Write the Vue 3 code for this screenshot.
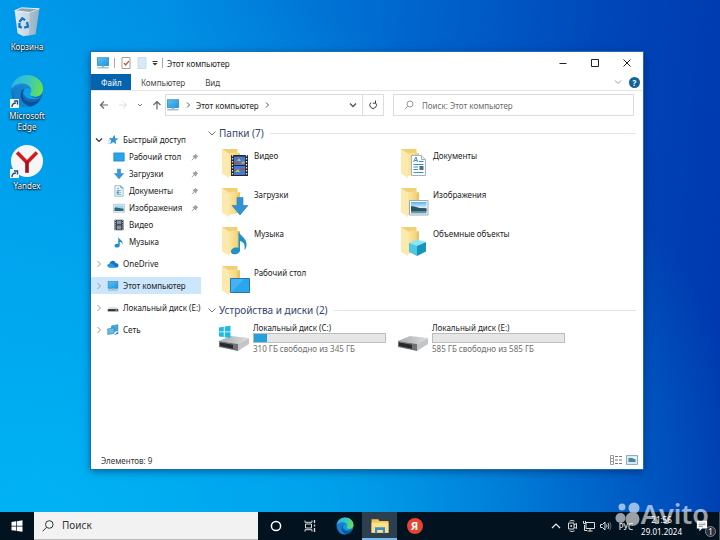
<script setup>
import { ref } from 'vue'

const search = ref('')
const taskSearch = ref('')

const shortcuts = [
  { label: 'Корзина', icon: 'bin', link: false },
  { label: 'Microsoft Edge', icon: 'edge', link: true },
  { label: 'Yandex', icon: 'yandex', link: true },
]

const quick = [
  { label: 'Рабочий стол', icon: 'desk', pinned: true },
  { label: 'Загрузки', icon: 'down', pinned: true },
  { label: 'Документы', icon: 'doc', pinned: true },
  { label: 'Изображения', icon: 'pic', pinned: true },
  { label: 'Видео', icon: 'film', pinned: false },
  { label: 'Музыка', icon: 'note', pinned: false },
]

const roots = [
  { label: 'OneDrive', icon: 'cloud' },
  { label: 'Этот компьютер', icon: 'pc', active: true },
  { label: 'Локальный диск (E:)', icon: 'minidrive' },
  { label: 'Сеть', icon: 'net' },
]

const folders = [
  { label: 'Видео', icon: 'f-film' },
  { label: 'Документы', icon: 'f-doc' },
  { label: 'Загрузки', icon: 'f-down' },
  { label: 'Изображения', icon: 'f-pic' },
  { label: 'Музыка', icon: 'f-note' },
  { label: 'Объемные объекты', icon: 'f-cube' },
  { label: 'Рабочий стол', icon: 'f-desk' },
]

const drives = [
  { label: 'Локальный диск (C:)', info: '310 ГБ свободно из 345 ГБ', used: 10, icon: 'drive-c' },
  { label: 'Локальный диск (E:)', info: '585 ГБ свободно из 585 ГБ', used: 0, icon: 'drive' },
]
</script>

<template>
  <div class="screen">
    <svg class="defs" aria-hidden="true">
      <defs>
        <linearGradient id="gFolder" x1="0" y1="0" x2="1" y2="0">
          <stop offset="0" stop-color="#fbe7a2" /><stop offset="1" stop-color="#f3d37a" />
        </linearGradient>
        <linearGradient id="gScreen" x1="0" y1="0" x2="1" y2="1">
          <stop offset="0" stop-color="#5cc4f6" /><stop offset="1" stop-color="#1e93dc" />
        </linearGradient>
        <linearGradient id="gEdgeA" x1="0" y1="0.3" x2="1" y2="0.5">
          <stop offset="0" stop-color="#2fb4e8" /><stop offset="0.5" stop-color="#35c6c4" /><stop offset="1" stop-color="#66e052" />
        </linearGradient>
        <linearGradient id="gEdgeB" x1="0" y1="0" x2="0" y2="1">
          <stop offset="0" stop-color="#1f9fe6" /><stop offset="1" stop-color="#0c59a4" />
        </linearGradient>
        <linearGradient id="gBin" x1="0" y1="0" x2="1" y2="0">
          <stop offset="0" stop-color="#dfe9ef" /><stop offset="0.55" stop-color="#c5d8e4" /><stop offset="1" stop-color="#9fb9c9" />
        </linearGradient>
        <linearGradient id="gTop" x1="0" y1="0" x2="1" y2="0">
          <stop offset="0" stop-color="#a9abae" /><stop offset="1" stop-color="#dcdddf" />
        </linearGradient>
        <linearGradient id="gSky" x1="0" y1="0" x2="0" y2="1">
          <stop offset="0" stop-color="#5eb0e4" /><stop offset="0.5" stop-color="#d9eff8" /><stop offset="0.55" stop-color="#3c6a76" /><stop offset="1" stop-color="#6ba7c4" />
        </linearGradient>
      </defs>

      <symbol id="bin" viewBox="0 0 36 36">
        <path d="M5 6 31 4l-4 27-13 2-6-3z" fill="url(#gBin)" />
        <path d="M5 6 12 3l19 1-10 4z" fill="#8da4b2" stroke="#edf4f8" stroke-width="1" />
        <path d="M21 8 31 4l-4 27-7 2z" fill="#89a6b8" opacity=".45" />
        <path d="m10 18 3-4 3 2M18 18l1 5-4 1M12.500 24l-2.500-1v-4" fill="none" stroke="#1673bd" stroke-width="2.400" />
      </symbol>
      <symbol id="edge" viewBox="0 0 36 36">
        <circle cx="18" cy="18" r="17" fill="url(#gEdgeB)" />
        <path d="M1.300 16C2.500 7 9.500 1 18 1c10 0 17 7 17 14.500 0 6-4.500 8.500-8.500 8.500-4 0-6-1.500-5.500-3 1-1.500 1.500-2.500 1.500-4C22.500 13 18 10 13 10 7.500 10 3 12.500 1.300 16z" fill="url(#gEdgeA)" />
        <path d="M12.500 17c-2.500 7 2.500 15 10.500 16.500C16 37 7 34 4.500 27 2 20 7 12.500 14 13c-.5 1-1 2.500-1.500 4z" fill="#1480d0" />
        <path d="M15.500 15.500c-5 6-1 14.500 7 14.500 4 0 7-1.500 9.500-4-2 4.500-5.500 7.500-9.500 8.200C14 33.500 9 25 12 18.500c.8-1.500 2-2.500 3.500-3z" fill="#0d4f9b" />
        <path d="M15.500 15.800c-1.700 2.200-1.600 5 0 7.200 3 4 11 5 16.500 2-2.500 1-10 .5-11-3-.3-1 1.500-2 1.500-5-2-2.500-5-3-7-1.200z" fill="#0a9fe8" />
      </symbol>
      <symbol id="yandex" viewBox="0 0 36 36">
        <circle cx="18" cy="18" r="17" fill="#f6f6f6" />
        <path d="M7.500 9 18 19.500M28.500 9 18 19.500" fill="none" stroke="#d01920" stroke-width="3.800" />
        <path d="M18 18.500v12" stroke="#a50f16" stroke-width="3.800" />
      </symbol>
      <symbol id="pc" viewBox="0 0 16 16">
        <rect x="1.500" y="2" width="13" height="9" fill="url(#gScreen)" stroke="#2a83b5" stroke-width=".8" />
        <path d="M6.500 11h3v2h-3z" fill="#9db4c0" /><path d="M1.500 13.500h13" stroke="#91b4c8" stroke-width="1.400" />
      </symbol>
      <symbol id="star" viewBox="0 0 16 16">
        <path d="m10 1 1 4.500 4.500.8-4 2.500 1 5-4-3-4.500 2.700 1.600-4.700L2 5.500l5 .2z" fill="#2b93d1" />
        <path d="M1 9h3M1 12h3" stroke="#8dc2e2" />
      </symbol>
      <symbol id="desk" viewBox="0 0 16 16"><path d="M1 2.500h14v11H1z" fill="#27a4ee" stroke="#177ab8" stroke-width=".8" /></symbol>
      <symbol id="down" viewBox="0 0 16 16"><path d="M5.500 1h5v6H15l-7 8-7-8h4.500z" fill="#3b97d6" /></symbol>
      <symbol id="doc" viewBox="0 0 16 16">
        <path d="M2.500 1h8l3 3v11h-11z" fill="#f7fcff" stroke="#7fa6ba" /><path d="M10.500 1v3h3M5 5h3M5 7.500h6M5 12.500h6" fill="none" stroke="#3c8ab4" /><path d="M5 9h3v2H5zM9 10h2" fill="#3c8ab4" stroke="#67aacb" />
      </symbol>
      <symbol id="pic" viewBox="0 0 16 16">
        <path d="M.5 3h15v10.500H.5z" fill="#eef5f8" stroke="#a9bbc4" /><path d="M2 4.500h12V12H2z" fill="#9ed5ef" /><path d="M2 8c4-2 6 1 12 .5V12H2z" fill="#326779" />
      </symbol>
      <symbol id="film" viewBox="0 0 16 16">
        <path d="M2 1h12v14H2z" fill="#33383d" /><path d="M5 2h6v5H5zM5 8.500h6V14H5z" fill="#8296a7" /><path d="M3.300 1v14M12.700 1v14" stroke="#d7dadd" stroke-dasharray="1.500 1.500" />
      </symbol>
      <symbol id="note" viewBox="0 0 16 16">
        <path d="M7 1c.8 4 6.500 4 6 10.500-.5-2.500-2-3.500-4-4v5c0 3.500-7 4-7 .5 0-2.300 3-3.200 5-2.300z" fill="#1d8fc8" />
      </symbol>
      <symbol id="cloud" viewBox="0 0 16 16">
        <path d="M3.500 12.500C-.5 12 0 7.500 3.500 7.500 4.500 3 10 2.500 11.500 6.500c4 0 5.500 5 2 6z" fill="#1273c6" /><path d="M3.500 7.500c3-1 5 1 8.500 5h-8C0 12.500-.5 8 3.500 7.500z" fill="#2b98e4" />
      </symbol>
      <symbol id="minidrive" viewBox="0 0 16 16">
        <path d="M3 7h10l2 2.500H1z" fill="#d7d9da" /><path d="M1 9.500h14v3H1z" fill="#303234" /><path d="M11.500 11h2" stroke="#d9e8d9" />
      </symbol>
      <symbol id="net" viewBox="0 0 16 16">
        <path d="M6 2.500 14.500 1v8L6 10.500z" fill="#3fa9e3" stroke="#2b7eac" stroke-width=".8" /><path d="M1 6.500 9.500 5v7.500L1 14z" fill="#64bde9" stroke="#2b7eac" stroke-width=".8" /><path d="M9.500 15 15 9.500V13z" fill="#3a7690" />
      </symbol>
      <symbol id="pin" viewBox="0 0 10 10">
        <path d="m5.500 1 3.500 3.500-1 .4-1.200 1.200-.3 1.900-1-.2L2.200 4.500 2 3.500l1.900-.3L5.100 2z" fill="#9ba1a5" /><path d="M4 6 1 9" stroke="#8b9297" />
      </symbol>

      <symbol id="folder" viewBox="0 0 32 32">
        <path d="M2 2h15.500v25H9z" fill="#f1cf75" /><path d="M17.500 6.500 20 6v21h-6z" fill="#e9c567" />
        <path d="M2 2 9 6.500V31l-7-4.500z" fill="#fbe9ae" /><path d="M9 6.500 17.500 5v22L9 29z" fill="url(#gFolder)" />
      </symbol>
      <symbol id="f-film" viewBox="0 0 32 32">
        <use href="#folder" /><path d="M11 8h17v21H11z" fill="#23262b" /><path d="M14 9.500h11v8.500H14zM14 19h11v9H14z" fill="#4779cf" />
        <path d="m17 14 2-3 2 3zM21 17l2-3 2 2zM15 25l3-3 2 3z" fill="#e4b43c" /><path d="M14 16h4M20 22h4" stroke="#b64b3a" stroke-width="1.500" />
        <path d="M12.500 8v21M26.500 8v21" stroke="#e2e2e2" stroke-width="1.300" stroke-dasharray="1.500 1.500" />
      </symbol>
      <symbol id="f-doc" viewBox="0 0 32 32">
        <use href="#folder" /><path d="M12.500 8.500h10l4 4V28.500h-14z" fill="#fdfeff" stroke="#a5b3bc" /><path d="M22.500 8.500v4h4" fill="#dfe8ed" stroke="#a5b3bc" />
        <path d="m14.500 15 2.500-5 1.500 5M15.500 13.500h2.500M20 14.500h4.500M14.500 17.500h10M14.500 20h4.500M14.500 22.500h4.500M14.500 25.500h10" fill="none" stroke="#3a8fca" /><path d="M20.500 19h4v4h-4z" fill="#4c6e86" />
      </symbol>
      <symbol id="f-down" viewBox="0 0 32 32"><use href="#folder" /><path d="M17 11.500h6v8h5L20 29l-8-9.500h5z" fill="#3192d4" stroke="#287fbc" stroke-width=".6" /></symbol>
      <symbol id="f-pic" viewBox="0 0 32 32"><use href="#folder" /><path d="M10.500 14.500h18.500v14.500H10.500z" fill="#f8fbfc" stroke="#9aaab3" /><path d="M12 16h15.500v11.500H12z" fill="url(#gSky)" /><path d="M12 20c5 0 8 3 15.500 3v2H12z" fill="#31545c" /></symbol>
      <symbol id="f-note" viewBox="0 0 32 32"><use href="#folder" /><path d="M18.500 5.500c1 6 9 7 8 15.500-.6 3-2 4-2 4 .8-5-.5-8-4.500-9v9c0 5-9 6-9 1.500 0-3 4-5 7.500-3.500z" fill="#1f91c9" /></symbol>
      <symbol id="f-desk" viewBox="0 0 32 32"><use href="#folder" /><path d="M10.500 14.500H29.500V28.500H10.500z" fill="#2ba5ee" stroke="#1b79b4" /><path d="M11 15h13L12 28h-1z" fill="#5ebdf5" opacity=".55" /></symbol>
      <symbol id="f-cube" viewBox="0 0 32 32"><use href="#folder" /><path d="m10 18 8-3.500 9 2.500-9 4z" fill="#8ce4f5" /><path d="m10 18 8 3v10l-8-4z" fill="#4fc7e2" /><path d="m18 21 9-4v9.500L18 31z" fill="#1595bb" /></symbol>
      <symbol id="drive" viewBox="0 0 32 32">
        <path d="m1 19 12-5 18 2-11 6z" fill="url(#gTop)" /><path d="m1 19 19 3v7L1 25z" fill="#707376" /><path d="m2 20.500 13 2.300v4L2 24z" fill="#26292b" /><path d="m20 22 11-6v6l-11 7z" fill="#c3c5c7" />
      </symbol>
      <symbol id="drive-c" viewBox="0 0 32 32">
        <use href="#drive" /><path d="M1 5.500 5.800 4.800v4.600H1zM6.700 4.600 12.500 3.700v5.700H6.700zM1 10.300h4.800v4.800L1 14.500zM6.700 10.300h5.800v5.700l-5.800-.8z" fill="#1fb9e5" />
      </symbol>
    </svg>

    <main class="desktop">
      <ul class="shortcuts">
        <li v-for="s in shortcuts" :key="s.label">
          <a href="#" class="shortcut">
            <span class="pic">
              <svg class="big"><use :href="'#' + s.icon" /></svg>
              <svg v-if="s.link" class="arrow" viewBox="0 0 9 9"><path d="M0 0h9v9H0z" fill="#f4f6f8" /><path d="M2 8C2 5 4 4 6 4M4 2h3.500v3.500" fill="none" stroke="#1c4f8e" stroke-width="1.400" /></svg>
            </span>
            <span>{{ s.label }}</span>
          </a>
        </li>
      </ul>

      <section class="window">
        <header class="titlebar">
          <svg class="i14"><use href="#pc" /></svg>
          <i class="sep"></i>
          <button class="plain" aria-label="Свойства"><svg class="i12" viewBox="0 0 12 12"><path d="M2 .5h8v11H2z" fill="#fff" stroke="#a4a09a" /><path d="m4 6 1.700 2L9 4" fill="none" stroke="#c35b2c" stroke-width="1.200" /></svg></button>
          <button class="plain" aria-label="Новая папка"><svg class="i12" viewBox="0 0 12 12"><path d="M2 .5h8v11H2z" fill="#d9e8f6" stroke="#c9dced" /></svg></button>
          <button class="plain" aria-label="Настройка панели"><svg class="i6" viewBox="0 0 6 6"><path d="M.5 1.500h5" stroke="#333" /><path d="m.5 3 2.500 2.500L5.500 3z" fill="#333" /></svg></button>
          <i class="sep tight"></i>
          <h1>Этот компьютер</h1>
          <div class="controls">
            <button class="plain" aria-label="Свернуть"><svg class="i10" viewBox="0 0 10 10"><path d="M1.500 5.500h7" stroke="#222" /></svg></button>
            <button class="plain" aria-label="Развернуть"><svg class="i10" viewBox="0 0 10 10"><path d="M1.500 1.500h7v7h-7z" fill="none" stroke="#222" /></svg></button>
            <button class="plain" aria-label="Закрыть"><svg class="i10" viewBox="0 0 10 10"><path d="m1.500 1.500 7 7m0-7-7 7" stroke="#222" /></svg></button>
          </div>
        </header>

        <nav class="tabs">
          <button class="tab file">Файл</button>
          <button class="tab">Компьютер</button>
          <button class="tab">Вид</button>
          <button class="plain end" aria-label="Развернуть ленту"><svg class="i8" viewBox="0 0 8 8"><path d="m1 2.500 3 3 3-3" fill="none" stroke="#999" /></svg></button>
          <button class="help" aria-label="Справка">?</button>
        </nav>

        <div class="address">
          <div class="arrows">
            <button class="plain" aria-label="Назад"><svg class="i10" viewBox="0 0 10 10"><path d="M9 5H1.500m3.500-3.500L1.500 5 5 8.500" fill="none" stroke="#666" stroke-width="1.200" /></svg></button>
            <button class="plain" aria-label="Вперед"><svg class="i10" viewBox="0 0 10 10"><path d="M1 5h7.500M5 1.500 8.500 5 5 8.500" fill="none" stroke="#ddd" /></svg></button>
            <button class="plain" aria-label="Последние"><svg class="i6" viewBox="0 0 6 6"><path d="m1 2 2 2 2-2" fill="none" stroke="#777" /></svg></button>
            <button class="plain" aria-label="Вверх"><svg class="i10" viewBox="0 0 10 10"><path d="M5 9.500V1.500M1.500 5 5 1.500 8.500 5" fill="none" stroke="#666" stroke-width="1.200" /></svg></button>
          </div>
          <div class="path">
            <svg class="i14"><use href="#pc" /></svg>
            <svg class="i6" viewBox="0 0 6 6"><path d="m2 .5 2.500 2.500L2 5.500" fill="none" stroke="#555" /></svg>
            <a href="#">Этот компьютер</a>
            <svg class="i6" viewBox="0 0 6 6"><path d="m2 .5 2.500 2.500L2 5.500" fill="none" stroke="#555" /></svg>
            <button class="plain end" aria-label="Журнал"><svg class="i8" viewBox="0 0 8 8"><path d="m1 2.500 3 3 3-3" fill="none" stroke="#555" stroke-width="1.300" /></svg></button>
            <button class="refresh" aria-label="Обновить"><svg class="i10" viewBox="0 0 10 10"><path d="M7.500 2.800A3.300 3.300 0 1 1 3 2.600M7.500.5v2.700H4.800" fill="none" stroke="#444" /></svg></button>
          </div>
          <label class="find">
            <svg class="i10" viewBox="0 0 10 10"><circle cx="6" cy="4" r="3" fill="none" stroke="#999" /><path d="M3.800 6.200.8 9.200" stroke="#999" /></svg>
            <input v-model="search" type="search" placeholder="Поиск: Этот компьютер" aria-label="Поиск: Этот компьютер" />
          </label>
        </div>

        <div class="body">
          <nav class="tree">
            <a href="#" class="node"><svg class="i8" viewBox="0 0 8 8"><path d="m1 2.500 3 3 3-3" fill="none" stroke="#333" stroke-width="1.200" /></svg><svg class="i12"><use href="#star" /></svg><span>Быстрый доступ</span></a>
            <a v-for="q in quick" :key="q.label" href="#" class="node child">
              <svg class="i12"><use :href="'#' + q.icon" /></svg><span>{{ q.label }}</span>
              <svg v-if="q.pinned" class="i8 pinned"><use href="#pin" /></svg>
            </a>
            <a v-for="r in roots" :key="r.label" href="#" class="node root" :class="{ active: r.active }">
              <svg class="i8" viewBox="0 0 8 8"><path d="m2.500 1 3 3-3 3" fill="none" stroke="#999" /></svg><svg class="i12"><use :href="'#' + r.icon" /></svg><span>{{ r.label }}</span>
            </a>
          </nav>

          <div class="content">
            <h2><svg class="i8" viewBox="0 0 8 8"><path d="m.5 2.500 3.500 3.500 3.500-3.500" fill="none" stroke="#777" /></svg>Папки (7)</h2>
            <div class="folders">
              <a v-for="f in folders" :key="f.label" href="#" class="folder"><svg class="i32"><use :href="'#' + f.icon" /></svg><span>{{ f.label }}</span></a>
            </div>
            <h2><svg class="i8" viewBox="0 0 8 8"><path d="m.5 2.500 3.500 3.500 3.500-3.500" fill="none" stroke="#777" /></svg>Устройства и диски (2)</h2>
            <div class="drives">
              <a v-for="d in drives" :key="d.label" href="#" class="drive">
                <svg class="i32"><use :href="'#' + d.icon" /></svg>
                <span class="facts">
                  <span>{{ d.label }}</span>
                  <span class="bar"><span class="fill" :style="{ width: d.used + '%' }"></span></span>
                  <span class="info">{{ d.info }}</span>
                </span>
              </a>
            </div>
          </div>
        </div>

        <footer class="status">
          <span>Элементов: 9</span>
          <button class="plain end" aria-label="Таблица"><svg class="i12" viewBox="0 0 12 12"><path d="M.5 1.500h3v9h-3zM.5 4.500h3m-3 3h3" fill="none" stroke="#999" /><path d="M5 2.500h3m1 0h3M5 6h3m1 0h3M5 9.500h3m1 0h3" stroke="#777" /></svg></button>
          <button class="plain" aria-label="Крупные значки"><svg class="i12" viewBox="0 0 12 12"><path d="M.5 1.500h11v9H.5z" fill="#d6ecf6" stroke="#8eafbf" /><path d="M2.500 4h7v4h-7z" fill="#4e8599" /><path d="M5 3.500h5v2z" fill="#fff" /></svg></button>
        </footer>
      </section>
    </main>

    <footer class="taskbar">
      <button class="start" aria-label="Пуск"><svg class="i12" viewBox="0 0 12 12"><path d="M.5 2 5 1.300v4.400H.5zM5.700 1.200 11.500.3v5.400H5.700zM.5 6.400H5v4.400l-4.500-.6zM5.700 6.400h5.800v5.400l-5.800-.9z" fill="#fff" /></svg></button>
      <label class="tasksearch">
        <svg class="i12" viewBox="0 0 12 12"><circle cx="7.300" cy="4.500" r="3.800" fill="none" stroke="#333" /><path d="M4.500 7.300.6 11.300" stroke="#333" /></svg>
        <input v-model="taskSearch" type="search" placeholder="Поиск" aria-label="Поиск" />
      </label>
      <button class="app" aria-label="Кортана"><svg class="i12" viewBox="0 0 12 12"><circle cx="6" cy="6" r="4.600" fill="none" stroke="#fff" stroke-width="1.500" /></svg></button>
      <button class="app narrow" aria-label="Представление задач"><svg class="i12" viewBox="0 0 12 12"><path d="M1 .5v1.800h7V.5M1 11.500V9.700h7v1.800M1.500 4h6v4h-6z" fill="none" stroke="#ddd" /><path d="M10.500 0v3M10.500 4.500v2M10.500 8v4" stroke="#ddd" stroke-width="1.300" /></svg></button>
      <button class="app" aria-label="Edge"><svg class="i18"><use href="#edge" /></svg></button>
      <button class="app open" aria-label="Проводник"><svg class="i16" viewBox="0 0 16 16"><path d="M.5 2h6l1 1.500h8V14H.5z" fill="#f2c750" /><path d="M.5 5h15v9H.5z" fill="#fde08a" /><path d="M3.500 9h9v5.500h-2V11.500h-5v3h-2z" fill="#3e8ec4" /></svg></button>
      <button class="app" aria-label="Яндекс"><span class="ya">Я</span></button>

      <div class="tray">
        <button class="plain" aria-label="Скрытые значки"><svg class="i10" viewBox="0 0 10 10"><path d="m1 7 4-4 4 4" fill="none" stroke="#eee" stroke-width="1.200" /></svg></button>
        <button class="plain" aria-label="Камера"><svg class="i12" viewBox="0 0 12 12"><path d="M3.500 1.200C5 .4 7 .4 8.500 1.200M3.500 10.800c1.500.8 3.500.8 5 0M2.500 3h5.500v6H2.500zM8 5l2.500-1.500v5L8 7" fill="none" stroke="#ddd" /><circle cx="5.200" cy="6" r="1" fill="#ddd" /></svg></button>
        <button class="plain" aria-label="Сеть"><svg class="i12" viewBox="0 0 12 12"><path d="M3 2.500h8.500v6H3zM7 8.500v2.300M4.500 11h5M1.500 5v5.500H4M.5 1v2.500h2V1" fill="none" stroke="#ddd" /></svg></button>
        <button class="plain" aria-label="Громкость"><svg class="i12" viewBox="0 0 12 12"><path d="M.5 4.500h2L5 2v8L2.500 7.500h-2z" fill="none" stroke="#ddd" /><path d="M6.500 4.500q1 1.500 0 3M8 3q2 3 0 6" fill="none" stroke="#ccc" /><path d="M9.700 1.800q2.800 4.200 0 8.400" fill="none" stroke="#667" /></svg></button>
        <span class="lang">РУС</span>
        <time class="clock" datetime="2024-01-29T21:56"><span>21:56</span><span>29.01.2024</span></time>
        <button class="notes" aria-label="Уведомления"><svg class="i12" viewBox="0 0 14 14"><path d="M1 1h12v9H7l-3 3v-3H1z" fill="#fff" /><path d="M3 3.500h8M3 5.500h8M3 7.500h5" stroke="#54606b" stroke-width=".8" /></svg><span class="badge">1</span></button>
      </div>
    </footer>

    <div class="mark">
      <svg viewBox="0 0 26 26"><circle cx="8" cy="6" r="3.500" /><circle cx="20" cy="7" r="5.500" /><circle cx="6.500" cy="17" r="5" /><circle cx="18.500" cy="18" r="7" /></svg>
      <span>Avito</span>
    </div>
  </div>
</template>

<style>
body { margin: 0; }
</style>

<style scoped>
.screen { position: relative; display: flex; flex-direction: column; min-height: 100vh; overflow: hidden; font-family: "Noto Sans", "Open Sans", sans-serif; font-size: 8px; line-height: 11px; color: #222; background: radial-gradient(ellipse at 5% 95%, #00b2f3 0%, rgba(0, 170, 240, .85) 30%, rgba(0, 130, 225, 0) 75%), linear-gradient(95deg, #0098ea 0%, #008fe4 20%, #006ad0 50%, #0046b8 80%, #0037ae 100%); }
.screen *, .screen *::before { box-sizing: border-box; }
.defs { position: absolute; width: 0; height: 0; }
svg { display: block; flex: none; }
a { color: inherit; text-decoration: none; }
button, input { font: inherit; color: inherit; border: 0; padding: 0; background: none; }
input { min-width: 0; flex: 1; outline: none; appearance: none; }
.plain { display: flex; align-items: center; justify-content: center; }
.end { margin-left: auto; }
.i6 { width: 6px; height: 6px; }
.i8 { width: 8px; height: 8px; }
.i10 { width: 10px; height: 10px; }
.i12 { width: 12px; height: 12px; }
.i14 { width: 14px; height: 14px; }
.i16 { width: 18px; height: 18px; }
.i18 { width: 18px; height: 18px; }
.i32 { width: 32px; height: 32px; }

.desktop { position: relative; flex: 1; }
.shortcuts { list-style: none; margin: 0; padding: 5px 0 0; width: 54px; display: flex; flex-direction: column; }
.shortcut { display: flex; flex-direction: column; align-items: center; gap: 2px; text-align: center; color: #fff; text-shadow: 0 1px 2px #000, 0 0 2px #000; padding-bottom: 12px; }
.shortcuts li:first-child .shortcut { padding-bottom: 22px; }
.pic { position: relative; }
.big { width: 34px; height: 34px; }
.arrow { position: absolute; left: 0; bottom: 0; width: 9px; height: 9px; }

.window { position: absolute; inset: 52px 77px 43px 91px; display: flex; flex-direction: column; background: #fff; box-shadow: 0 0 0 1px #1b6fae, 0 2px 8px rgba(0, 10, 50, .5); }
.titlebar { display: flex; align-items: center; gap: 4px; height: 22px; padding-left: 5px; }
.titlebar h1 { margin: 0; font-size: 8px; font-weight: 400; }
.sep { width: 1px; height: 10px; margin: 0 1px 0 0; background: #aaa; }
.sep.tight { margin: 0; }
.controls { display: flex; margin-left: auto; }
.controls .plain { width: 32px; height: 22px; }
.tabs { display: flex; align-items: center; height: 17px; padding-right: 3px; border-bottom: 1px solid #e3e5e7; }
.tab { height: 16px; padding: 0 10px; color: #444; }
.tab.file { width: 40px; color: #fff; background: #0563ad; }
.help { width: 11px; height: 11px; margin-left: 7px; border-radius: 50%; background: #11639c; color: #fff; font-weight: 700; }
.address { display: flex; gap: 9px; padding: 3px 9px 3px 8px; }
.arrows { display: flex; align-items: center; gap: 9px; width: 58px; }
.path, .find { display: flex; align-items: center; height: 22px; border: 1px solid #dcdcdc; }
.path { flex: 220; gap: 5px; }
.refresh { display: flex; align-items: center; justify-content: center; width: 21px; height: 20px; border-left: 1px solid #dcdcdc; }
.find { flex: 241; gap: 8px; padding-left: 10px; color: #666; }
.arrows { flex: none; margin-right: -1px; }
.path { flex: 0 1 219px; }
.find { flex: 1; }
input::placeholder { color: #6b6b6b; opacity: 1; }
.body { display: flex; flex: 1; min-height: 0; }
.tree { width: 110px; padding-top: 12px; }
.node { display: flex; align-items: center; height: 17px; gap: 4px; padding-left: 4px; white-space: nowrap; }
.node.child { padding: 0 2px 0 22px; }
.node.root { margin-top: 5px; }
.node.active { background: #cce6fc; }
.pinned { margin-left: auto; }
.content { flex: 1; padding: 7px 7px 0 7px; }
h2 { display: flex; align-items: center; gap: 3px; height: 14px; margin: 0; font-size: 10px; line-height: 14px; font-weight: 400; color: #33456f; }
h2::after { content: ""; flex: 1; height: 1px; margin-left: 3px; background: #e2e4e8; }
.folders, .drives { display: grid; grid-template-columns: 179px 1fr; padding-left: 10px; }
.folders { grid-auto-rows: 39px; padding-top: 7px; }
.folder { display: flex; gap: 2px; padding-left: 2px; }
.folder span { padding-top: 3px; }
.drives { padding-top: 5px; }
.drive { display: flex; gap: 3px; }
.facts { display: flex; flex-direction: column; width: 133px; }
.bar { height: 10px; border: 1px solid #bcbcbc; background: #e6e6e6; }
.fill { display: block; height: 8px; background: #26a0da; }
.info { color: #6d6d6d; }
.status { display: flex; align-items: center; gap: 4px; height: 18px; padding: 0 5px 0 10px; color: #333; }

.taskbar { display: flex; align-items: stretch; height: 28px; background: #03121f; color: #fff; }
.start { display: grid; place-items: center; width: 34px; }
.tasksearch { display: flex; align-items: center; gap: 8px; width: 224px; padding-left: 8px; background: #f2f2f2; border-bottom: 1px solid #bbb; font-size: 10px; color: #333; }
.tasksearch input::placeholder { color: #333; }
.app { display: grid; place-items: center; width: 35px; }
.app.narrow { width: 34px; }
.app.open { background: #2d3f4e; box-shadow: inset 0 -2px #76b9ed; }
.ya { width: 16px; height: 16px; border-radius: 50%; background: #e8432f; font-size: 11px; line-height: 16px; font-weight: 700; color: #fff; }
.tray { display: flex; align-items: center; gap: 5px; margin-left: auto; padding-right: 2px; border-right: 1px solid #465360; }
.lang { margin-left: 2px; }
.clock { display: flex; flex-direction: column; align-items: center; line-height: 12px; margin-left: 3px; }
.notes { position: relative; display: grid; place-items: center; width: 30px; height: 28px; }
.badge { position: absolute; right: 1px; bottom: 3px; width: 11px; height: 11px; border-radius: 50%; border: 1px solid #888; background: #27313b; line-height: 9px; }
.mark { position: absolute; right: 11px; bottom: 8px; display: flex; align-items: center; gap: 1px; height: 36px; color: #fff; opacity: .6; font-size: 27px; line-height: 36px; font-weight: 600; pointer-events: none; }
.mark svg { width: 26px; height: 26px; fill: #fff; }
</style>
